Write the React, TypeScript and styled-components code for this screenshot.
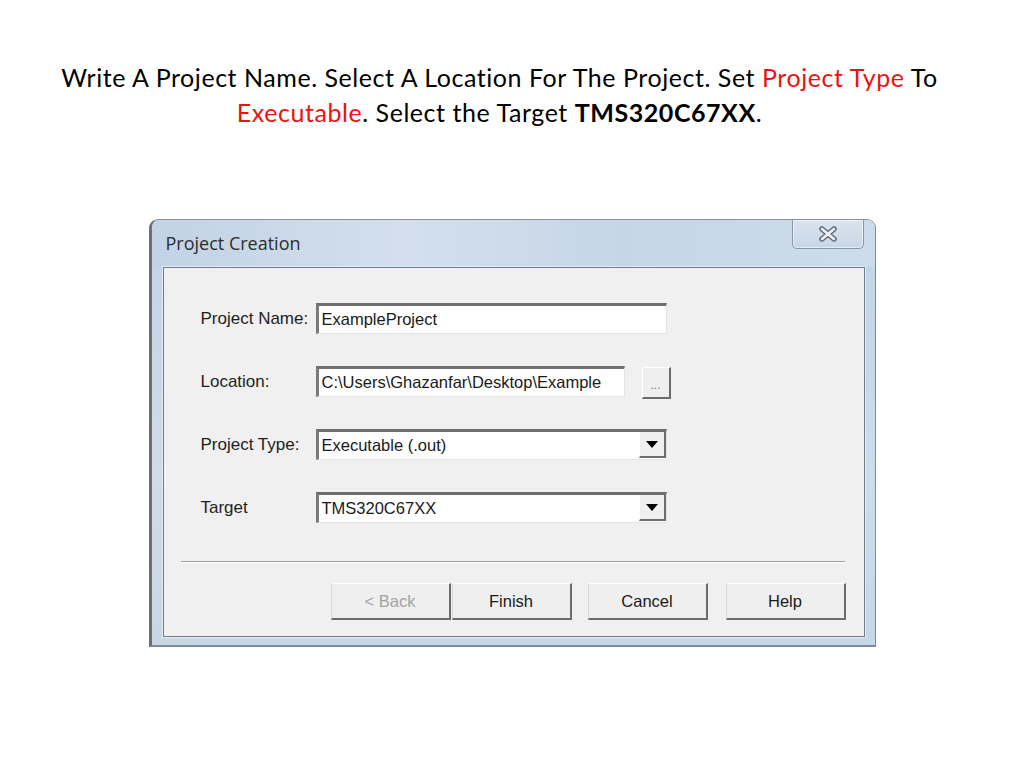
import React from 'react';
import styled, { createGlobalStyle } from 'styled-components';

const GlobalStyle = createGlobalStyle`
  html, body {
    margin: 0;
    padding: 0;
    background: #ffffff;
  }
  body {
    width: 1024px;
    height: 768px;
    overflow: hidden;
  }
`;

const Page = styled.div`
  width: 1024px;
  height: 768px;
  display: flex;
  flex-direction: column;
  align-items: center;
  background: #ffffff;
`;

// the slide text sits a little left of centre
const Heading = styled.div`
  margin-top: 60px;
  width: 960px;
  padding-right: 25px;
  text-align: center;
  font-family: Lato, 'Open Sans', sans-serif;
  font-size: 25px;
  letter-spacing: 0.55px;
  line-height: 35px;
  color: #000;
`;

const Red = styled.span`
  color: #ee1111;
`;

const Bold = styled.span`
  font-weight: 700;
`;

const Window = styled.div`
  margin-top: 89px;
  width: 727px;
  height: 428px;
  box-sizing: border-box;
  display: flex;
  flex-direction: column;
  border-radius: 9px 9px 0 0;
  border-left: 3px solid #6f6f6f;
  border-top: 1px solid #8a9098;
  border-right: 1px solid #7c8a98;
  border-bottom: 2px solid #7c8a98;
  background: linear-gradient(180deg, #c9d8e8 0%, #c3d5e8 10%, #cfdcea 60%, #c8d7e6 100%);
`;

const TitleBar = styled.div`
  height: 47px;
  display: flex;
  align-items: flex-start;
  justify-content: space-between;
  padding-left: 14px;
  padding-right: 11px;
  background: linear-gradient(90deg, #c2d3e6 0%, #d3dfec 35%, #c6d6e8 65%, #cddcea 100%);
  border-radius: 8px 8px 0 0;
`;

const Title = styled.div`
  margin-top: 11px;
  font-family: 'Open Sans', 'Noto Sans', sans-serif;
  font-size: 18px;
  color: #2c2c2c;
`;

const CloseButton = styled.div`
  width: 72px;
  height: 29px;
  box-sizing: border-box;
  display: flex;
  align-items: center;
  justify-content: center;
  border: 1px solid #8796a8;
  border-top: none;
  border-radius: 0 0 5px 5px;
  background: linear-gradient(180deg, #d9e4ef 0%, #c7d6e6 100%);
  box-shadow: inset 0 0 0 1px rgba(255, 255, 255, 0.55);
`;

const Client = styled.div`
  flex: 1;
  margin: 0 10px 8px 11px;
  display: flex;
  flex-direction: column;
  background: #f0f0f0;
  border: 1px solid #6f7e8e;
  box-shadow: 0 0 0 1px #e2eaf2;
`;

const Form = styled.div`
  display: flex;
  flex-direction: column;
  gap: 32px;
  padding: 35px 0 0 37px;
`;

const Row = styled.div`
  display: flex;
  align-items: center;
  height: 31px;
`;

const Label = styled.div`
  width: 115px;
  font-family: 'Liberation Sans', Arial, sans-serif;
  font-size: 17px;
  color: #1e1e1e;
`;

const Field = styled.div<{ w: number }>`
  width: ${(p) => p.w}px;
  height: 31px;
  box-sizing: border-box;
  display: flex;
  align-items: center;
  background: #ffffff;
  border-top: 3px solid #6e6e6e;
  border-left: 3px solid #7a7a7a;
  border-right: 1px solid #e4e4e4;
  border-bottom: 1px solid #e4e4e4;
  overflow: hidden;
`;

const FieldText = styled.span`
  flex: 1;
  padding-left: 3px;
  white-space: nowrap;
  overflow: hidden;
  font-family: 'Liberation Sans', Arial, sans-serif;
  font-size: 16.5px;
  color: #1a1a1a;
`;

const Raised = styled.div`
  box-sizing: border-box;
  display: flex;
  align-items: center;
  justify-content: center;
  background: #efefef;
  border-top: 1px solid #ffffff;
  border-left: 1px solid #ffffff;
  border-right: 2px solid #6c6c6c;
  border-bottom: 2px solid #6c6c6c;
`;

const DropButton = styled(Raised)`
  width: 27px;
  height: 27px;
  margin-top: -2px;
`;

const BrowseButton = styled(Raised)`
  width: 29px;
  height: 32px;
  margin-left: 17px;
  margin-top: 3px;
  font-family: 'Liberation Sans', Arial, sans-serif;
  font-size: 12px;
  color: #777;
  padding-top: 4px;
`;

const Separator = styled.div`
  margin: 38px 19px 0 17px;
  height: 1px;
  background: #a0a0a0;
  border-bottom: 1px solid #ffffff;
`;

const ButtonBar = styled.div`
  display: flex;
  justify-content: flex-end;
  padding: 20px 18px 0 0;
`;

const DialogButton = styled(Raised)<{ disabled?: boolean; gap: number }>`
  width: 120px;
  height: 37px;
  margin-left: ${(p) => p.gap}px;
  font-family: 'Liberation Sans', Arial, sans-serif;
  font-size: 16.5px;
  color: ${(p) => (p.disabled ? '#a3a3a3' : '#1a1a1a')};
  border-left-color: #d8d8d8;
`;

const Arrow = () => (
  <svg width="12" height="7" viewBox="0 0 12 7">
    <path d="M0 0 L12 0 L6 7 Z" fill="#000" />
  </svg>
);

const CloseGlyph = () => (
  <svg width="20" height="16" viewBox="0 0 20 16">
    <path d="M4 3 L16 13 M16 3 L4 13" stroke="#5f6b78" strokeWidth="5.5" strokeLinecap="round" />
    <path d="M4 3 L16 13 M16 3 L4 13" stroke="#eef2f6" strokeWidth="2.6" strokeLinecap="round" />
  </svg>
);

export default function App() {
  return (
    <Page>
      <GlobalStyle />
      <Heading>
        Write A Project Name. Select A Location For The Project. Set <Red>Project Type</Red> To
        <br />
        <Red>Executable</Red>. Select the Target <Bold>TMS320C67XX</Bold>.
      </Heading>
      <Window>
        <TitleBar>
          <Title>Project Creation</Title>
          <CloseButton>
            <CloseGlyph />
          </CloseButton>
        </TitleBar>
        <Client>
          <Form>
            <Row>
              <Label>Project Name:</Label>
              <Field w={351}>
                <FieldText>ExampleProject</FieldText>
              </Field>
            </Row>
            <Row>
              <Label>Location:</Label>
              <Field w={309}>
                <FieldText>C:\Users\Ghazanfar\Desktop\Example</FieldText>
              </Field>
              <BrowseButton>...</BrowseButton>
            </Row>
            <Row>
              <Label>Project Type:</Label>
              <Field w={351}>
                <FieldText>Executable (.out)</FieldText>
                <DropButton>
                  <Arrow />
                </DropButton>
              </Field>
            </Row>
            <Row>
              <Label>Target</Label>
              <Field w={351}>
                <FieldText>TMS320C67XX</FieldText>
                <DropButton>
                  <Arrow />
                </DropButton>
              </Field>
            </Row>
          </Form>
          <Separator />
          <ButtonBar>
            <DialogButton gap={0} disabled>
              &lt; Back
            </DialogButton>
            <DialogButton gap={1}>Finish</DialogButton>
            <DialogButton gap={16}>Cancel</DialogButton>
            <DialogButton gap={18}>Help</DialogButton>
          </ButtonBar>
        </Client>
      </Window>
    </Page>
  );
}
